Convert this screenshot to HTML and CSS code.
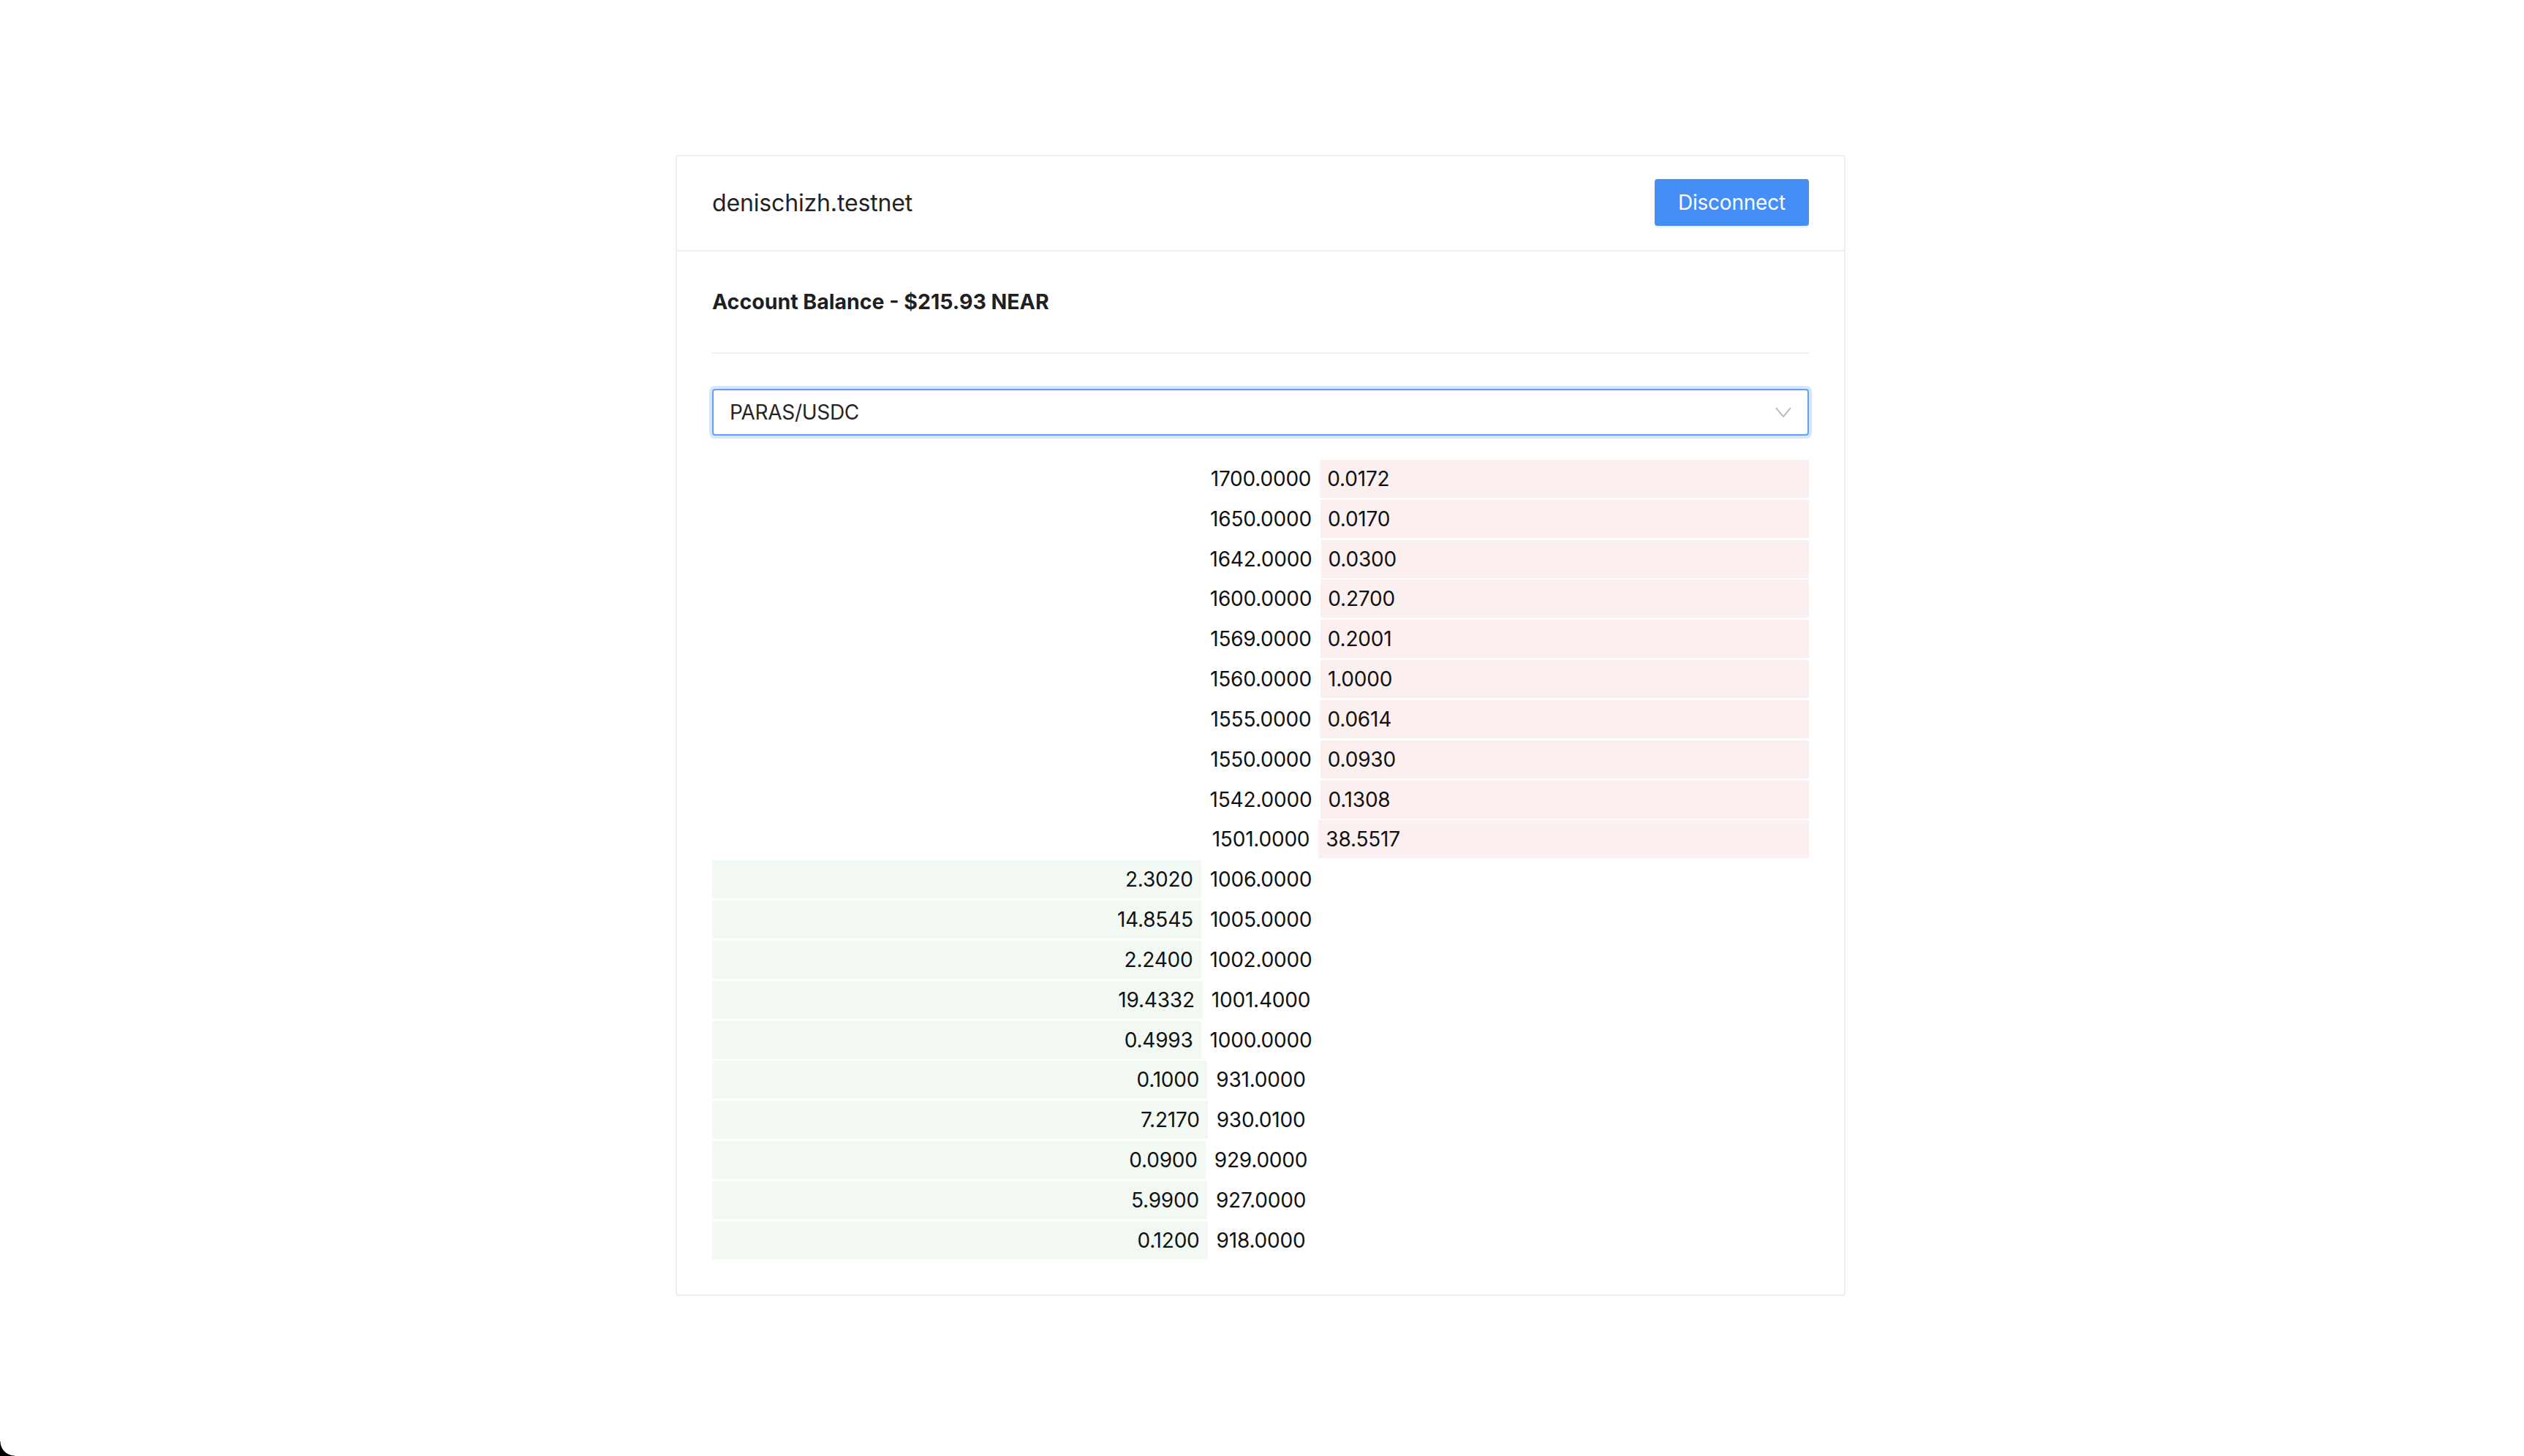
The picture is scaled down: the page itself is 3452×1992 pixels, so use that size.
FILE: index.html
```html
<!DOCTYPE html>
<html lang="en">
<head>
<meta charset="utf-8">
<title>Order book</title>
<link rel="stylesheet" href="styles.css">
</head>
<body>
<div class="card">
  <header class="card-header">
    <span class="account">denischizh.testnet</span>
    <button class="btn" type="button">Disconnect</button>
  </header>
  <div class="card-body">
    <div class="balance">Account Balance - $215.93 NEAR</div>
    <div class="select">
      <span class="select-value">PARAS/USDC</span>
      <svg class="chevron" width="22" height="14" viewBox="0 0 22 14"><path d="M1 1 L11 13 L21 1" fill="none" stroke="#bdbdbd" stroke-width="2"/></svg>
    </div>
    <div class="book">
      <div class="row"><div class="bid"></div><div class="price">1700.0000</div><div class="ask filled">0.0172</div></div>
      <div class="row"><div class="bid"></div><div class="price">1650.0000</div><div class="ask filled">0.0170</div></div>
      <div class="row"><div class="bid"></div><div class="price">1642.0000</div><div class="ask filled">0.0300</div></div>
      <div class="row"><div class="bid"></div><div class="price">1600.0000</div><div class="ask filled">0.2700</div></div>
      <div class="row"><div class="bid"></div><div class="price">1569.0000</div><div class="ask filled">0.2001</div></div>
      <div class="row"><div class="bid"></div><div class="price">1560.0000</div><div class="ask filled">1.0000</div></div>
      <div class="row"><div class="bid"></div><div class="price">1555.0000</div><div class="ask filled">0.0614</div></div>
      <div class="row"><div class="bid"></div><div class="price">1550.0000</div><div class="ask filled">0.0930</div></div>
      <div class="row"><div class="bid"></div><div class="price">1542.0000</div><div class="ask filled">0.1308</div></div>
      <div class="row"><div class="bid"></div><div class="price">1501.0000</div><div class="ask filled">38.5517</div></div>
      <div class="row"><div class="bid filled">2.3020</div><div class="price">1006.0000</div><div class="ask"></div></div>
      <div class="row"><div class="bid filled">14.8545</div><div class="price">1005.0000</div><div class="ask"></div></div>
      <div class="row"><div class="bid filled">2.2400</div><div class="price">1002.0000</div><div class="ask"></div></div>
      <div class="row"><div class="bid filled">19.4332</div><div class="price">1001.4000</div><div class="ask"></div></div>
      <div class="row"><div class="bid filled">0.4993</div><div class="price">1000.0000</div><div class="ask"></div></div>
      <div class="row"><div class="bid filled">0.1000</div><div class="price">931.0000</div><div class="ask"></div></div>
      <div class="row"><div class="bid filled">7.2170</div><div class="price">930.0100</div><div class="ask"></div></div>
      <div class="row"><div class="bid filled">0.0900</div><div class="price">929.0000</div><div class="ask"></div></div>
      <div class="row"><div class="bid filled">5.9900</div><div class="price">927.0000</div><div class="ask"></div></div>
      <div class="row"><div class="bid filled">0.1200</div><div class="price">918.0000</div><div class="ask"></div></div>
    </div>
  </div>
</div>
<div class="window-corner"></div>
</body>
</html>
```

FILE: styles.css
```css
html, body {
  margin: 0;
  background: #ffffff;
}

body {
  font-family: Inter, "Noto Sans", "Liberation Sans", sans-serif;
  color: #1c1c1c;
  padding: 212px 4px 0 0;
  display: flex;
  justify-content: center;
  min-height: 1992px;
  box-sizing: border-box;
}

.card {
  width: 1600px;
  box-sizing: border-box;
  border: 2px solid #efefef;
  border-radius: 4px;
  align-self: flex-start;
}

.card-header {
  display: flex;
  align-items: center;
  justify-content: space-between;
  padding: 31px 48px 33px 48px;
  border-bottom: 2px solid #efefef;
}

.account {
  font-size: 32px;
  color: #232323;
  letter-spacing: -0.15px;
}

.btn {
  font-family: Inter, "Noto Sans", "Liberation Sans", sans-serif;
  font-size: 28px;
  color: #ffffff;
  background: #448ef6;
  border: none;
  border-radius: 4px;
  height: 64px;
  padding: 0 32px;
  box-shadow: 0 3px 1px rgba(0, 0, 0, 0.05);
  letter-spacing: -0.2px;
}

.card-body {
  padding: 48px 48px 48px 48px;
}

.balance {
  font-size: 28.5px;
  font-weight: 700;
  line-height: 42px;
  color: #1f1f1f;
  padding-bottom: 48px;
  border-bottom: 2px solid #efefef;
}

.select {
  margin-top: 48px;
  margin-bottom: 33px;
  height: 64px;
  box-sizing: border-box;
  border: 2px solid #5ea1f8;
  border-radius: 4px;
  box-shadow: 0 0 0 4px #d7e6fd;
  display: flex;
  align-items: center;
  justify-content: space-between;
  padding: 0 22px 0 22px;
}

.select-value {
  font-size: 28px;
  color: #262626;
  letter-spacing: -0.3px;
}

.chevron {
  display: block;
}

.book {
  display: flex;
  flex-direction: column;
  gap: 2.84px;
}

.row {
  display: flex;
  height: 52px;
  font-size: 28px;
  color: #111111;
  letter-spacing: -0.2px;
}

.bid, .ask {
  flex: 1 1 0;
  display: flex;
  align-items: center;
}

.bid {
  justify-content: flex-end;
  padding-right: 11px;
}

.ask {
  justify-content: flex-start;
  padding-left: 10px;
}

.bid.filled {
  background: #f1f9f2;
}

.ask.filled {
  background: #fbefef;
}

.price {
  display: flex;
  align-items: center;
  padding: 0 12px;
}

.window-corner {
  position: fixed;
  left: 0;
  bottom: 0;
  width: 20px;
  height: 20px;
  background: radial-gradient(circle at 100% 0, transparent 19px, #000 20px);
}
```
